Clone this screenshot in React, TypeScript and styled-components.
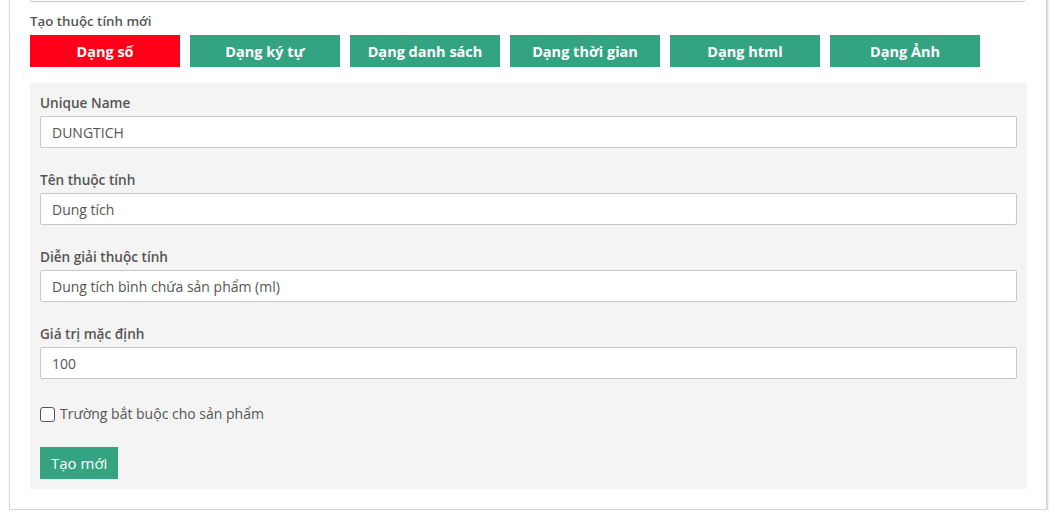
import React from "react";
import styled, { createGlobalStyle } from "styled-components";

const Global = createGlobalStyle`
  html, body { margin: 0; padding: 0; background: #fff; }
  body { font-family: "Open Sans", "Noto Sans", sans-serif; color: #555; overflow: hidden; }
  * { box-sizing: border-box; }
`;

const Card = styled.div`
  margin: -39px 0 0 9px;
  width: 1038px;
  background: #fff;
  border: 1px solid #d6d6d6;
  box-shadow: 1px 1px 2px rgba(0, 0, 0, 0.18);
  padding: 8px 19px 20px 20px;
`;

const TopInput = styled.div`
  height: 32px;
  width: calc(100% - 2px);
  border: 1px solid #c8c8c8;
  border-radius: 2px;
  background: #fff;
`;

const SectionLabel = styled.div`
  margin-top: 9px;
  font-size: 13.3px;
  line-height: 20px;
  font-weight: 600;
  color: #555;
`;

const TypeBar = styled.div`
  display: flex;
  gap: 10px;
  margin-top: 4px;
`;

const TypeButton = styled.button<{ $active?: boolean }>`
  width: 150px;
  height: 32px;
  border: none;
  border-radius: 0;
  padding: 0;
  background: ${(p) => (p.$active ? "#ff0018" : "#34a382")};
  color: #fff;
  font-family: "Open Sans", sans-serif;
  font-weight: 700;
  font-size: 14.5px;
  cursor: pointer;
`;

const Panel = styled.div`
  margin-top: 16px;
  background: #f4f4f4;
  padding: 10px;
  display: flex;
  flex-direction: column;
`;

const Field = styled.div`
  margin-bottom: 22px;
`;

const Label = styled.label`
  display: block;
  font-size: 13.6px;
  line-height: 20px;
  font-weight: 600;
  color: #555;
  margin-bottom: 3px;
`;

const Input = styled.input`
  display: block;
  width: 100%;
  height: 32px;
  border: 1px solid #c8c8c8;
  border-radius: 2px;
  background: #fff;
  padding: 0 11px;
  font-family: "Open Sans", sans-serif;
  font-size: 14px;
  color: #555;
  outline: none;
`;

const CheckRow = styled.label`
  display: flex;
  align-items: center;
  gap: 5px;
  font-size: 14px;
  line-height: 20px;
  color: #555;
  margin-top: 3px;
`;

const Check = styled.input`
  appearance: none;
  margin: 0;
  width: 15px;
  height: 15px;
  border: 1.5px solid #555;
  border-radius: 3px;
  background: #fff;
`;

const SubmitButton = styled.button`
  align-self: flex-start;
  margin-top: 23px;
  height: 32px;
  padding: 0 11px;
  border: none;
  border-radius: 0;
  background: #34a382;
  color: #fff;
  font-family: "Open Sans", sans-serif;
  font-size: 15px;
  cursor: pointer;
`;

const types = ["Dạng số", "Dạng ký tự", "Dạng danh sách", "Dạng thời gian", "Dạng html", "Dạng Ảnh"];

const fields = [
  { label: "Unique Name", value: "DUNGTICH" },
  { label: "Tên thuộc tính", value: "Dung tích" },
  { label: "Diễn giải thuộc tính", value: "Dung tích bình chứa sản phẩm (ml)" },
  { label: "Giá trị mặc định", value: "100" },
];

export default function App() {
  return (
    <>
      <Global />
      <Card>
        <TopInput />
        <SectionLabel>Tạo thuộc tính mới</SectionLabel>
        <TypeBar>
          {types.map((t, i) => (
            <TypeButton key={t} $active={i === 0}>
              {t}
            </TypeButton>
          ))}
        </TypeBar>
        <Panel>
          {fields.map((f) => (
            <Field key={f.label}>
              <Label>{f.label}</Label>
              <Input defaultValue={f.value} />
            </Field>
          ))}
          <CheckRow>
            <Check type="checkbox" />
            Trường bắt buộc cho sản phẩm
          </CheckRow>
          <SubmitButton>Tạo mới</SubmitButton>
        </Panel>
      </Card>
    </>
  );
}
